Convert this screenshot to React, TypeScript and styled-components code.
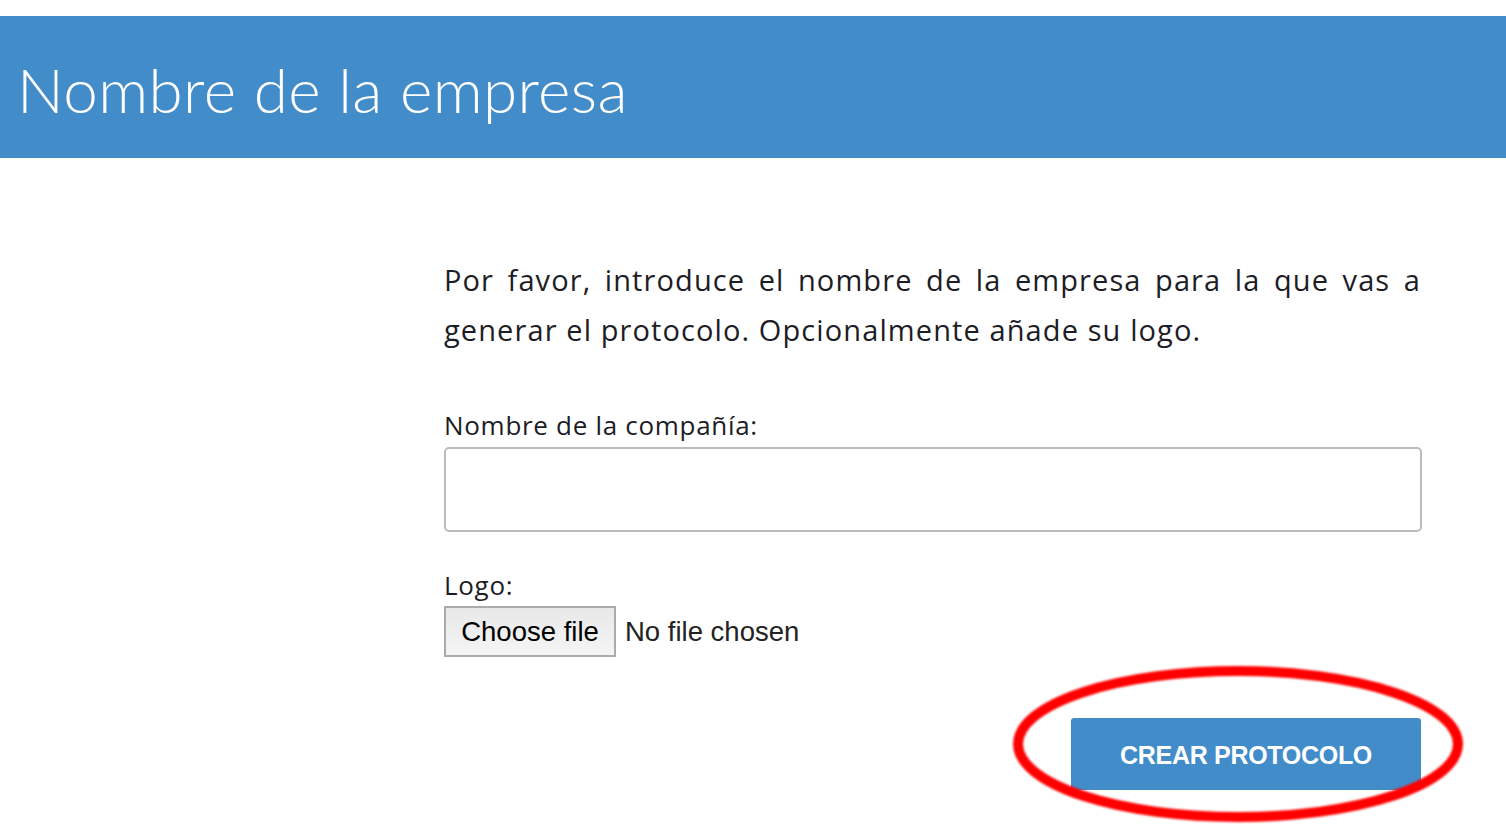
import React from "react";
import styled, { createGlobalStyle } from "styled-components";

const Global = createGlobalStyle`
  html, body { margin: 0; padding: 0; background: #ffffff; }
  body { font-family: "Open Sans", Lato, sans-serif; color: #1d1d26; }
  * { box-sizing: border-box; }
`;

const Page = styled.div`
  padding-top: 16px;
  width: 1506px;
  min-height: 832px;
`;

const Header = styled.header`
  background: #428cca;
  height: 142px;
  display: flex;
  align-items: center;
  padding-left: 17px;
  padding-top: 4px;
`;

const Title = styled.h1`
  margin: 0;
  font-family: Lato, sans-serif;
  font-weight: 300;
  font-size: 62px;
  color: #ffffff;
  letter-spacing: 0.4px;
  line-height: 1;
`;

const Main = styled.main`
  display: grid;
  grid-template-columns: 444px 977px;
  padding-top: 97px;
`;

const Column = styled.section`
  grid-column: 2;
  display: flex;
  flex-direction: column;
`;

const Intro = styled.p`
  margin: 0;
  font-size: 29px;
  line-height: 50px;
  letter-spacing: 1.1px;
  text-align: justify;
`;

const Field = styled.div<{ $top: number }>`
  display: flex;
  flex-direction: column;
  margin-top: ${(p) => p.$top}px;
`;

const Label = styled.label<{ $gap: number }>`
  font-size: 26px;
  line-height: 32px;
  letter-spacing: 0.7px;
  margin-bottom: ${(p) => p.$gap}px;
`;

const TextInput = styled.input`
  height: 85px;
  width: 978px;
  border: 2px solid #bcbcbc;
  border-radius: 5px;
  font-size: 27px;
  padding: 0 14px;
  font-family: "Open Sans", sans-serif;
  outline: none;
`;

const FileRow = styled.div`
  display: flex;
  align-items: center;
  gap: 9px;
  font-family: "Liberation Sans", Arial, sans-serif;
`;

const HiddenFile = styled.input`
  display: none;
`;

const FileButton = styled.label`
  display: flex;
  align-items: center;
  justify-content: center;
  height: 51px;
  width: 172px;
  border: 2px solid #ababab;
  background: linear-gradient(#e8e8e8, #f5f5f5);
  color: #000;
  font-size: 27.5px;
  cursor: pointer;
`;

const FileStatus = styled.span`
  color: #222;
  font-size: 27.5px;
`;

const Actions = styled.div`
  display: flex;
  justify-content: flex-end;
  margin-top: 61px;
  position: relative;
`;

const Submit = styled.button`
  width: 350px;
  height: 72px;
  background: #428cca;
  color: #ffffff;
  border: none;
  border-radius: 3px;
  font-family: "Liberation Sans", Arial, sans-serif;
  font-weight: 700;
  font-size: 25px;
  letter-spacing: -0.3px;
  padding-top: 4px;
`;

const Highlight = styled.svg`
  position: absolute;
  left: 556px;
  top: -66px;
  width: 470px;
  height: 180px;
  pointer-events: none;
  overflow: visible;
`;

export default function App() {
  return (
    <Page>
      <Global />
      <Header>
        <Title>Nombre de la empresa</Title>
      </Header>
      <Main>
        <Column>
          <Intro>
            Por favor, introduce el nombre de la empresa para la que vas a generar el protocolo.
            Opcionalmente añade su logo.
          </Intro>
          <Field $top={54}>
            <Label htmlFor="company" $gap={6}>Nombre de la compañía:</Label>
            <TextInput id="company" type="text" />
          </Field>
          <Field $top={37}>
            <Label htmlFor="logo" $gap={5}>Logo:</Label>
            <FileRow>
              <HiddenFile id="logo" type="file" />
              <FileButton htmlFor="logo">Choose file</FileButton>
              <FileStatus>No file chosen</FileStatus>
            </FileRow>
          </Field>
          <Actions>
            <Submit type="button">CREAR PROTOCOLO</Submit>
            <Highlight viewBox="0 0 470 180">
              <defs>
                <filter id="soft" x="-10%" y="-20%" width="120%" height="140%">
                  <feGaussianBlur stdDeviation="1.2" />
                </filter>
              </defs>
              <ellipse cx="238" cy="92" rx="220" ry="73" fill="none" stroke="#ff0000" strokeWidth="10" filter="url(#soft)" />
            </Highlight>
          </Actions>
        </Column>
      </Main>
    </Page>
  );
}
